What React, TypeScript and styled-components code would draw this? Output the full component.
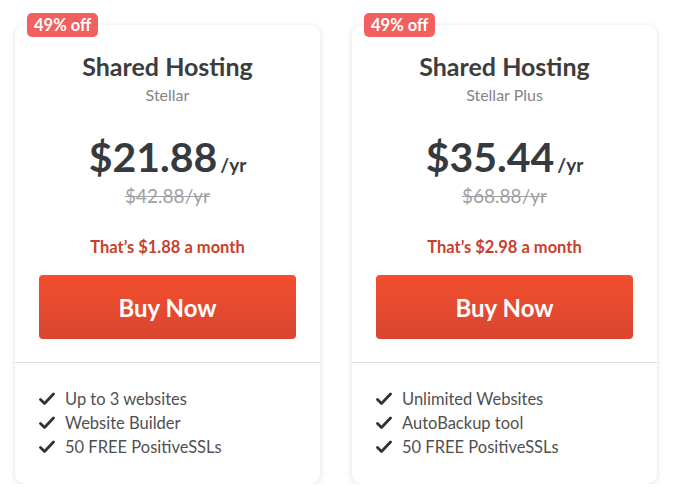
import styled, { createGlobalStyle } from 'styled-components';

const GlobalStyle = createGlobalStyle`
  body {
    margin: 0;
    background: #fff;
    font-family: Lato, "Open Sans", sans-serif;
  }
`;

const ScPage = styled.div`
  display: flex;
  gap: 32px;
  padding: 25px 0 0 15px;
`;

const ScCard = styled.div`
  position: relative;
  width: 305px;
  height: 459px;
  box-sizing: border-box;
  background: #fff;
  border-radius: 10px;
  box-shadow: 0 1px 6px rgba(0, 0, 0, 0.13);
  display: flex;
  flex-direction: column;
`;

const ScBadge = styled.div`
  position: absolute;
  top: -12px;
  left: 12px;
  height: 24px;
  padding: 0 7px;
  border-radius: 5px;
  background: #f1605e;
  color: #fff;
  font-weight: 700;
  font-size: 16.5px;
  line-height: 24px;
`;

const ScTop = styled.div`
  display: flex;
  flex-direction: column;
  align-items: center;
  padding: 26px 24px 0;
  height: 338px;
  box-sizing: border-box;
  border-bottom: 1px solid #dcdcdc;
`;

const ScTitle = styled.h2`
  margin: 0;
  font-size: 25px;
  font-weight: 700;
  line-height: 30px;
  color: #3d3d3d;
`;

const ScSub = styled.div`
  margin-top: 4px;
  font-size: 16px;
  color: #858585;
`;

const ScPrice = styled.div`
  margin-top: 28px;
  display: flex;
  align-items: baseline;
  color: #363a3e;
  > strong {
    font-size: 41px;
    font-weight: 700;
    line-height: 50px;
  }
  > span {
    font-size: 19px;
    font-weight: 700;
    margin-left: 3px;
  }
`;

const ScOld = styled.div`
  margin-top: 2px;
  font-size: 19px;
  color: #a0a0a0;
  text-decoration: line-through;
`;

const ScMonth = styled.div`
  margin-top: 30px;
  font-size: 16.5px;
  font-weight: 700;
  color: #c9402a;
`;

const ScButton = styled.button`
  margin-top: 18px;
  width: 257px;
  height: 64px;
  border: none;
  border-radius: 4px;
  background: linear-gradient(#f24e2e, #d94631);
  color: #fff;
  font-family: inherit;
  font-size: 24px;
  font-weight: 700;
  cursor: pointer;
`;

const ScList = styled.ul`
  list-style: none;
  margin: 0;
  padding: 26px 0 0 24px;
  display: flex;
  flex-direction: column;
  gap: 4px;
`;

const ScItem = styled.li`
  display: flex;
  align-items: center;
  gap: 10px;
  font-size: 16.5px;
  line-height: 20px;
  color: #505050;
`;

const Check = () => (
  <svg width="16" height="14" viewBox="0 0 16 14">
    <path d="M1.5 7.5 L5.5 11.5 L14.5 2" fill="none" stroke="#333" strokeWidth="2.8" strokeLinecap="round" strokeLinejoin="round" />
  </svg>
);

type Plan = {
  name: string,
  price: string,
  old: string,
  month: string,
  features: string[]
}

const plans: Plan[] = [
  { name: 'Stellar', price: '$21.88', old: '$42.88/yr', month: '$1.88', features: ['Up to 3 websites', 'Website Builder', '50 FREE PositiveSSLs'] },
  { name: 'Stellar Plus', price: '$35.44', old: '$68.88/yr', month: '$2.98', features: ['Unlimited Websites', 'AutoBackup tool', '50 FREE PositiveSSLs'] },
];

function App() {
  return (
    <>
      <GlobalStyle />
      <ScPage>
        {plans.map((p, i) => (
          <ScCard key={i}>
            <ScBadge>{'49% off'}</ScBadge>
            <ScTop>
              <ScTitle>{'Shared Hosting'}</ScTitle>
              <ScSub>{p.name}</ScSub>
              <ScPrice><strong>{p.price}</strong><span>{'/yr'}</span></ScPrice>
              <ScOld>{p.old}</ScOld>
              <ScMonth>{`That’s ${p.month} a month`}</ScMonth>
              <ScButton>{'Buy Now'}</ScButton>
            </ScTop>
            <ScList>
              {p.features.map((f, j) => (
                <ScItem key={j}><Check />{f}</ScItem>
              ))}
            </ScList>
          </ScCard>
        ))}
      </ScPage>
    </>
  );
}

export default App;
